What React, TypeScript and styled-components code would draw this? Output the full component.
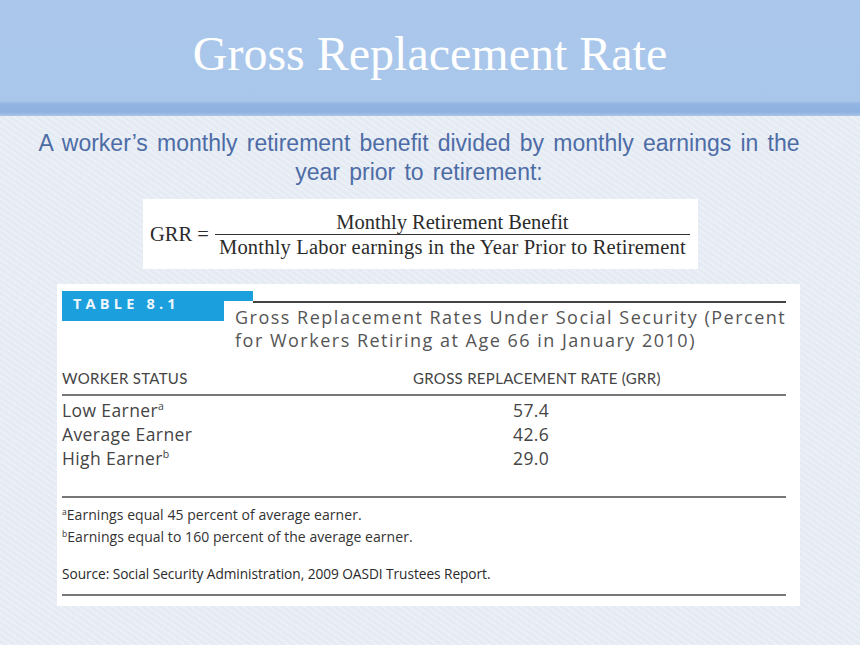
import React from "react";
import styled, { createGlobalStyle } from "styled-components";

const Global = createGlobalStyle`
  html, body { margin: 0; padding: 0; }
  body { width: 860px; height: 645px; overflow: hidden; background: #e9eef6; }
`;

const Page = styled.div`
  width: 860px;
  height: 645px;
  display: flex;
  flex-direction: column;
  align-items: center;
  background:
    repeating-linear-gradient(35deg, rgba(255,255,255,0.18) 0 2px, rgba(215,224,238,0.12) 2px 5px),
    #e7ecf4;
`;

const Header = styled.header`
  width: 100%;
  height: 116px;
  box-sizing: border-box;
  display: flex;
  flex-direction: column;
  background: linear-gradient(to bottom, #abc8ec 0, #a9c6eb 101px, #92b4e2 104px, #8eb1e0 112px, #a9c4e8 116px);
`;

const Title = styled.h1`
  margin: 0;
  padding-top: 26px;
  text-align: center;
  font-family: "Liberation Serif", "DejaVu Serif", serif;
  font-weight: 400;
  font-size: 48px;
  line-height: 56px;
  color: #ffffff;
`;

const Lead = styled.p`
  margin: 13px 0 0 -22px;
  width: 775px;
  text-align: center;
  font-family: "Liberation Sans", Arial, sans-serif;
  font-size: 23px;
  word-spacing: 2.8px;
  line-height: 29px;
  color: #4d6ca6;
`;

const Formula = styled.div`
  margin-top: 12px;
  width: 555px;
  height: 70px;
  box-sizing: border-box;
  background: #ffffff;
  display: flex;
  align-items: center;
  padding: 0 8px 0 7px;
  margin-left: -19px;
  font-family: "Liberation Serif", "DejaVu Serif", serif;
  color: #2b2b2b;
  font-size: 20.5px;
`;

const Lhs = styled.span`
  white-space: nowrap;
  margin-right: 6px;
`;

const Fraction = styled.div`
  flex: 1;
  display: flex;
  flex-direction: column;
  align-items: center;
  line-height: 24px;
`;

const Numer = styled.span`
  width: 100%;
  text-align: center;
  border-bottom: 1.5px solid #333;
`;

const Denom = styled.span`
  white-space: nowrap;
  letter-spacing: 0.2px;
`;

const Table = styled.section`
  margin-top: 15px;
  width: 743px;
  height: 322px;
  box-sizing: border-box;
  background: #ffffff;
  padding: 7px 14px 0 5px;
  margin-left: -3px;
  font-family: "Open Sans", "DejaVu Sans", sans-serif;
  color: #444;
`;

const Caption = styled.div`
  display: flex;
  align-items: flex-start;
`;

const Badge = styled.div`
  flex: none;
  width: 162px;
  height: 30px;
  background: #1ba0dd;
  color: #eef6fb;
  font-family: "Open Sans", "DejaVu Sans", sans-serif;
  font-weight: 700;
  font-size: 14.5px;
  line-height: 20px;
  letter-spacing: 4.2px;
  box-sizing: border-box;
  padding: 3px 0 0 11px;
  position: relative;
  &::after {
    content: "";
    position: absolute;
    left: 162px;
    top: 0;
    width: 29px;
    height: 10px;
    background: #1ba0dd;
  }
`;

const CaptionBody = styled.div`
  flex: 1;
  position: relative;
  margin-left: 11px;
  padding-top: 15px;
  font-size: 18px;
  letter-spacing: 1.5px;
  line-height: 23px;
  color: #555;
  white-space: nowrap;
  &::before {
    content: "";
    position: absolute;
    left: 18px;
    right: 0;
    top: 10px;
    height: 1.5px;
    background: #444;
  }
`;

const HeadRow = styled.div`
  display: grid;
  grid-template-columns: 351px 1fr;
  margin-top: 17px;
  padding-bottom: 7px;
  line-height: 18px;
  border-bottom: 2px solid #777;
  font-family: "Lato", sans-serif;
  font-size: 15px;
  letter-spacing: 0.3px;
  color: #444;
`;

const Body = styled.div`
  padding-top: 2px;
  height: 102px;
  box-sizing: border-box;
  border-bottom: 2px solid #777;
`;

const Row = styled.div`
  display: grid;
  grid-template-columns: 451px 1fr;
  font-size: 17.5px;
  letter-spacing: 0.4px;
  line-height: 24px;
  color: #444;
`;

const Sup = styled.sup`
  font-size: 10.5px;
  line-height: 0;
  vertical-align: 7px;
`;

const Notes = styled.div`
  padding-top: 6px;
  height: 98px;
  box-sizing: border-box;
  border-bottom: 2px solid #777;
  font-size: 14px;
  letter-spacing: 0.05px;
  color: #333;
`;

const Note = styled.div`
  line-height: 22px;
`;

const Source = styled.div`
  margin-top: 15px;
  line-height: 22px;
  font-size: 13.7px;
  letter-spacing: -0.05px;
  color: #2a2a2a;
`;

const NoteSup = styled.sup`
  font-size: 8.5px;
  line-height: 0;
  vertical-align: 5px;
`;

const rows = [
  { label: "Low Earner", sup: "a", value: "57.4" },
  { label: "Average Earner", sup: "", value: "42.6" },
  { label: "High Earner", sup: "b", value: "29.0" },
];

export default function App() {
  return (
    <>
      <Global />
      <Page>
        <Header>
          <Title>Gross Replacement Rate</Title>
        </Header>
        <Lead>
          A worker’s monthly retirement benefit divided by monthly earnings in the year prior to retirement:
        </Lead>
        <Formula>
          <Lhs>GRR =</Lhs>
          <Fraction>
            <Numer>Monthly Retirement Benefit</Numer>
            <Denom>Monthly Labor earnings in the Year Prior to Retirement</Denom>
          </Fraction>
        </Formula>
        <Table>
          <Caption>
            <Badge>TABLE 8.1</Badge>
            <CaptionBody>
              Gross Replacement Rates Under Social Security (Percent
              <br />
              for Workers Retiring at Age 66 in January 2010)
            </CaptionBody>
          </Caption>
          <HeadRow>
            <span>WORKER STATUS</span>
            <span>GROSS REPLACEMENT RATE (GRR)</span>
          </HeadRow>
          <Body>
            {rows.map((r) => (
              <Row key={r.label}>
                <span>
                  {r.label}
                  {r.sup && <Sup>{r.sup}</Sup>}
                </span>
                <span>{r.value}</span>
              </Row>
            ))}
          </Body>
          <Notes>
            <Note>
              <NoteSup>a</NoteSup>Earnings equal 45 percent of average earner.
            </Note>
            <Note>
              <NoteSup>b</NoteSup>Earnings equal to 160 percent of the average earner.
            </Note>
            <Source>Source: Social Security Administration, 2009 OASDI Trustees Report.</Source>
          </Notes>
        </Table>
      </Page>
    </>
  );
}
